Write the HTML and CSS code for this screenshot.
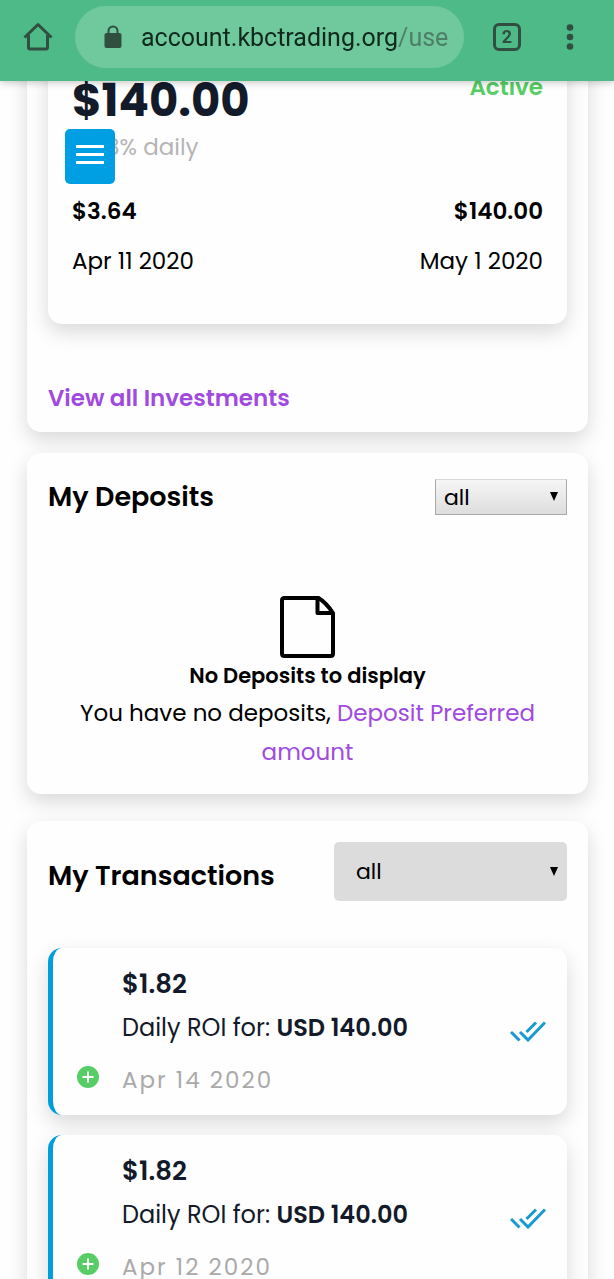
FILE: index.html
```html
<!DOCTYPE html>
<html lang="en">
<head>
    <meta charset="UTF-8">
    <meta name="viewport" content="width=device-width, initial-scale=1.0">
    <title>KBC Trading - Account</title>
    <link rel="stylesheet" href="styles.css">
</head>
<body>
    <!-- Browser bar -->
    <header class="browser-bar">
        <button class="bar-btn" aria-label="Home">
            <svg width="30" height="30" viewBox="0 0 30 30" fill="none" stroke="#314f41" stroke-width="3" stroke-linejoin="round">
                <path d="M1.500 15.500L15 2.500L28.500 15.500M5.500 13V25.500Q5.500 27 7 27H23Q24.500 27 24.500 25.500V13" />
            </svg>
        </button>
        <a href="#" class="url-bar">
            <svg class="lock" width="18" height="24" viewBox="0 0 18 24">
                <rect x="0.500" y="8" width="17" height="15" rx="2" fill="#314f41" />
                <path d="M4.500 9V6a4.500 4.500 0 0 1 9 0V9" fill="none" stroke="#314f41" stroke-width="2" />
            </svg>
            <span class="url">account.kbctrading.org<span class="url-path">/use</span></span>
        </a>
        <button class="bar-btn tabs-btn" aria-label="Open tabs"><span class="tab-count">2</span></button>
        <button class="bar-btn more-btn" aria-label="More options">
            <svg width="8" height="26" viewBox="0 0 8 26" fill="#314f41">
                <circle cx="4" cy="3.500" r="3.300" />
                <circle cx="4" cy="13" r="3.300" />
                <circle cx="4" cy="22.500" r="3.300" />
            </svg>
        </button>
    </header>

    <!-- Floating menu toggle -->
    <button class="menu-toggle" aria-label="Menu Toggle">
        <span></span>
        <span></span>
        <span></span>
    </button>

    <main class="page">
        <section class="card investments">
            <div class="investment">
                <div class="row row-top">
                    <h1 class="amount">$140.00</h1>
                    <span class="status">Active</span>
                </div>
                <p class="rate">+ 1.3% daily</p>
                <div class="row figures">
                    <strong>$3.64</strong>
                    <strong>$140.00</strong>
                </div>
                <div class="row dates">
                    <span>Apr 11 2020</span>
                    <span>May 1 2020</span>
                </div>
            </div>
            <a href="#" class="view-all">View all Investments</a>
        </section>

        <section class="card deposits">
            <div class="row card-head">
                <h2><label for="deposit-filter">My Deposits</label></h2>
                <div class="select-wrap">
                    <select id="deposit-filter">
                        <option>all</option>
                    </select>
                </div>
            </div>
            <div class="empty">
                <svg width="56" height="62" viewBox="0 0 56 62" fill="none" stroke="#000" stroke-width="4" stroke-linejoin="round">
                    <path d="M4.500 2H38.500Q46 6.500 53 17V57.500Q53 60 50.500 60H4.500Q2 60 2 57.500V4.500Q2 2 4.500 2Z" />
                    <path d="M37.500 2V17H53" />
                </svg>
                <h3>No Deposits to display</h3>
                <p>You have no deposits, <a href="#">Deposit Preferred amount</a></p>
            </div>
        </section>

        <section class="card transactions">
            <div class="row card-head">
                <h2><label for="transaction-filter">My Transactions</label></h2>
                <div class="select-wrap wide">
                    <select id="transaction-filter">
                        <option>all</option>
                    </select>
                </div>
            </div>
            <ul class="list">
                <li class="item">
                    <svg class="plus" width="22" height="22" viewBox="0 0 22 22">
                        <circle cx="11" cy="11" r="11" fill="#56ce65" />
                        <path d="M11 5.500V16.500M5.500 11H16.500" stroke="#fff" stroke-width="2" />
                    </svg>
                    <div class="item-body">
                        <h4>$1.82</h4>
                        <p>Daily ROI for: <b>USD 140.00</b></p>
                        <time datetime="2020-04-14">Apr 14 2020</time>
                    </div>
                    <svg class="checks" width="36" height="22" viewBox="0 0 36 22" fill="none" stroke="#1899d0" stroke-width="3">
                        <path d="M1 12L9.500 20.500M10 12L18 20L35 2.500M16.500 12L26 2.500" />
                    </svg>
                </li>
                <li class="item">
                    <svg class="plus" width="22" height="22" viewBox="0 0 22 22">
                        <circle cx="11" cy="11" r="11" fill="#56ce65" />
                        <path d="M11 5.500V16.500M5.500 11H16.500" stroke="#fff" stroke-width="2" />
                    </svg>
                    <div class="item-body">
                        <h4>$1.82</h4>
                        <p>Daily ROI for: <b>USD 140.00</b></p>
                        <time datetime="2020-04-12">Apr 12 2020</time>
                    </div>
                    <svg class="checks" width="36" height="22" viewBox="0 0 36 22" fill="none" stroke="#1899d0" stroke-width="3">
                        <path d="M1 12L9.500 20.500M10 12L18 20L35 2.500M16.500 12L26 2.500" />
                    </svg>
                </li>
            </ul>
        </section>
    </main>
</body>
</html>
```
FILE: styles.css
```css
* {
    box-sizing: border-box;
    margin: 0;
    padding: 0;
}

body {
    height: 100vh;
    overflow: hidden;
    background: #fefefe;
    color: #000;
    font-family: 'Poppins', 'Inter', sans-serif;
    font-size: 23px;
}

a {
    color: #a04ae0;
    text-decoration: none;
}

button {
    border: none;
    background: none;
    cursor: pointer;
}

/* Browser bar */
.browser-bar {
    position: fixed;
    top: 0;
    left: 0;
    width: 100%;
    z-index: 10;
    display: flex;
    align-items: center;
    padding: 6px 24px 13px 0;
    background: #4eba87;
    box-shadow: 0 1px 8px rgba(0, 0, 0, 0.25);
}

.bar-btn {
    width: 75px;
    height: 62px;
    display: flex;
    align-items: center;
    justify-content: center;
}

.url-bar {
    flex: 1;
    min-width: 0;
    height: 62px;
    padding: 0 14px 0 29px;
    display: flex;
    align-items: center;
    gap: 19px;
    border-radius: 31px;
    background: #70c89d;
    font-family: 'Roboto', sans-serif;
    font-size: 25px;
    color: #10291d;
}

.lock {
    flex-shrink: 0;
}

.url {
    white-space: nowrap;
}

.url-path {
    color: #4d7f68;
}

.tabs-btn {
    width: 86px;
}

.more-btn {
    width: 40px;
}

.tab-count {
    width: 28px;
    height: 28px;
    border: 3px solid #314f41;
    border-radius: 6px;
    font: bold 18px/22px 'Roboto', sans-serif;
    color: #314f41;
}

/* Menu toggle */
.menu-toggle {
    position: fixed;
    top: 129px;
    left: 65px;
    z-index: 5;
    width: 50px;
    height: 55px;
    padding-bottom: 5px;
    display: flex;
    flex-direction: column;
    align-items: center;
    justify-content: center;
    gap: 5px;
    border-radius: 5px;
    background: #009fe3;
}

.menu-toggle span {
    width: 28px;
    height: 3px;
    background: #fff;
}

/* Cards */
.page {
    padding: 0 26px 0 27px;
}

.card {
    margin-bottom: 21px;
    padding: 0 21px;
    border-radius: 14px;
    background: #fefefe;
    box-shadow: 0 8px 20px rgba(0, 0, 0, 0.15);
}

.row {
    display: flex;
    justify-content: space-between;
}

h2 {
    font-size: 27px;
    font-weight: 600;
    line-height: 36px;
    white-space: nowrap;
}

/* Investments */
.investments {
    padding-bottom: 16px;
}

.investment {
    margin-bottom: 56px;
    padding: 77px 24px 45px;
    border-radius: 14px;
    background: #fefefe;
    box-shadow: 0 8px 20px rgba(0, 0, 0, 0.15);
}

.amount {
    font-size: 45px;
    font-weight: 700;
    line-height: 48px;
    color: #131a2a;
}

.status {
    font-weight: 600;
    line-height: 20px;
    color: #56ce65;
}

.rate {
    line-height: 44px;
    color: #b5b5b5;
}

.figures {
    margin: 24px 0 14px;
    line-height: 36px;
}

.figures strong {
    font-weight: 600;
}

.dates {
    line-height: 36px;
}

.view-all {
    display: block;
    font-weight: 600;
    line-height: 36px;
}

/* Deposits */
.deposits {
    padding-top: 26px;
    padding-bottom: 22px;
}

.empty {
    padding: 81px 28px 0;
    text-align: center;
}

.empty svg {
    display: block;
    margin: 0 auto;
}

.empty h3 {
    font-size: 21px;
    font-weight: 600;
    line-height: 36px;
}

.empty p {
    line-height: 39px;
}

/* Filters */
.select-wrap {
    position: relative;
    width: 132px;
}

.select-wrap::after {
    content: '';
    position: absolute;
    top: 50%;
    right: 9px;
    margin-top: -5px;
    border: solid transparent;
    border-width: 9px 4px 0;
    border-top-color: #000;
    pointer-events: none;
}

select {
    appearance: none;
    display: block;
    width: 100%;
    height: 36px;
    padding: 0 8px;
    border: 1px solid #a9a9a9;
    border-top-color: #d8d8d8;
    border-radius: 0;
    background: linear-gradient(#f6f6f6, #dddddd);
    color: #000;
    font-family: inherit;
    font-size: 22px;
}

.select-wrap.wide {
    width: 233px;
}

.wide select {
    height: 59px;
    padding: 0 22px;
    border: none;
    border-radius: 5px;
    background: #dcdcdc;
}

/* Transactions */
.transactions {
    margin-top: 27px;
    padding-top: 21px;
    padding-bottom: 21px;
}

.transactions .card-head {
    align-items: flex-end;
    margin-bottom: 47px;
}

.transactions h2 {
    line-height: 50px;
}

.list {
    list-style: none;
}

.item {
    display: flex;
    align-items: center;
    margin-bottom: 20px;
    padding: 16px 21px 17px 24px;
    border-left: 5px solid #009fdc;
    border-radius: 14px;
    background: #fefefe;
    box-shadow: 0 8px 20px rgba(0, 0, 0, 0.15);
}

.plus {
    align-self: flex-end;
    margin: 0 23px 10px 0;
}

.item-body {
    flex: 1;
    color: #131a2a;
}

.item-body h4 {
    font-size: 26px;
    font-weight: 600;
    line-height: 40px;
}

.item-body p {
    margin: 4px 0 14px;
    font-size: 24px;
    line-height: 40px;
}

.item-body b {
    font-weight: 600;
}

.item-body time {
    display: block;
    letter-spacing: 2px;
    line-height: 36px;
    color: #aaa;
}
```
